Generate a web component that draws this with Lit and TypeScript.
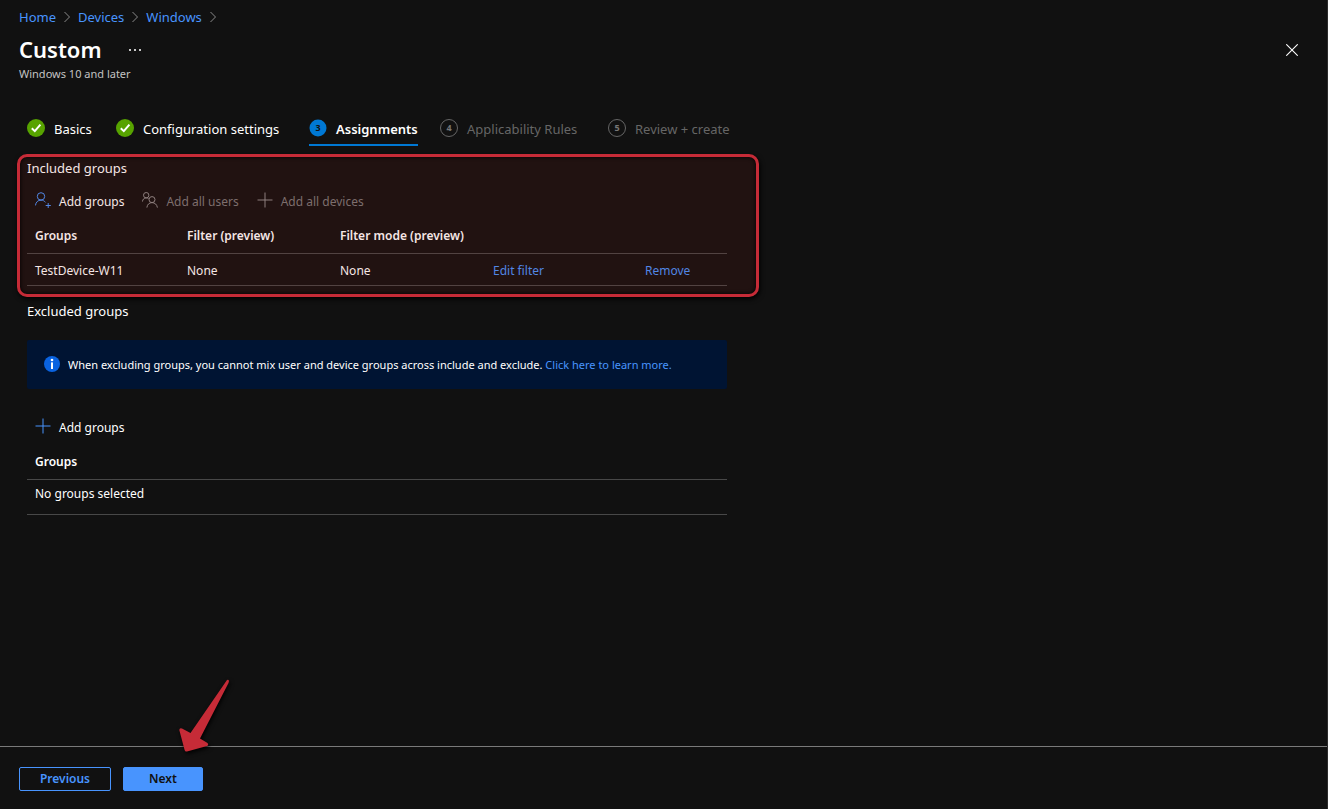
import { LitElement, html, svg, css, nothing } from "lit";
import { customElement } from "lit/decorators.js";
import { classMap } from "lit/directives/class-map.js";

type StepState = "done" | "current" | "pending";

interface Step {
  label: string;
  state: StepState;
}

const chevron = html`<svg class="chevron" viewBox="0 0 8 12" aria-hidden="true">
  <path d="M1.5 1 L6.5 6 L1.5 11" />
</svg>`;

const plusIcon = html`<svg class="icon" viewBox="0 0 16 16" aria-hidden="true">
  <path d="M8 0.5 V15.5 M0.5 8 H15.5" />
</svg>`;

const personAddIcon = html`<svg class="icon" viewBox="0 0 16 16" aria-hidden="true">
  <circle cx="6" cy="4.4" r="3.7" />
  <path d="M0.5 13.4 C0.7 10.3 3 8.1 6 8.1 C7.9 8.1 9.5 9 10.5 10.4 M13.2 11 V16 M10.7 13.5 H15.8" />
</svg>`;

const peopleIcon = html`<svg class="icon" viewBox="0 0 16 16" aria-hidden="true">
  <circle cx="4.2" cy="3.2" r="2.7" />
  <circle cx="10" cy="7.6" r="3" />
  <path d="M0.4 9.6 C0.7 7.3 2.2 5.9 4.2 5.9 C5.2 5.9 6 6.2 6.7 6.8 M4.9 15.6 C5.1 12.7 7.2 10.6 10 10.6 C12.9 10.6 15 12.7 15.4 15.6" />
</svg>`;

@customElement("app-root")
export class AppRoot extends LitElement {
  private crumbs = ["Home", "Devices", "Windows"];

  private steps: Step[] = [
    { label: "Basics", state: "done" },
    { label: "Configuration settings", state: "done" },
    { label: "Assignments", state: "current" },
    { label: "Applicability Rules", state: "pending" },
    { label: "Review + create", state: "pending" },
  ];

  static styles = css`
    :host {
      display: flex;
      flex-direction: column;
      box-sizing: border-box;
      min-height: 100vh;
      background: #111111;
      border-right: 1px solid #2b2b2b;
      color: #ffffff;
      font-family: "Noto Sans", "Open Sans", sans-serif;
      font-size: 13px;
      line-height: 20px;
    }
    * {
      box-sizing: border-box;
    }
    svg {
      display: block;
      flex: none;
      fill: none;
    }
    a {
      color: #4894fe;
      text-decoration: none;
    }
    button {
      font: inherit;
      color: inherit;
      background: none;
      border: 0;
      padding: 0;
      cursor: pointer;
    }
    h1,
    h2,
    p,
    ol {
      margin: 0;
      padding: 0;
      list-style: none;
    }
    main {
      flex: 1;
    }
    .header {
      padding: 7px 19px 0;
    }
    .crumbs {
      display: flex;
      align-items: center;
    }
    .crumb {
      display: flex;
      align-items: center;
    }
    .chevron {
      width: 8px;
      height: 12px;
      margin: 0 7px;
      stroke: #8a8a8a;
    }
    .title-row {
      display: flex;
      align-items: center;
      height: 32px;
      margin-top: 6px;
    }
    .title {
      font-size: 22px;
      line-height: 32px;
      font-weight: 600;
    }
    .more,
    .close {
      padding-top: 2px;
    }
    .more {
      margin-left: 27px;
    }
    .more svg {
      width: 12px;
      height: 4px;
      fill: #c8c8c8;
    }
    .close {
      margin-left: auto;
      margin-right: 10px;
    }
    .close svg {
      width: 12px;
      height: 12px;
      stroke: #ffffff;
      stroke-width: 1.1;
    }
    .subtitle {
      font-size: 11px;
      line-height: 16px;
      margin-top: 1px;
      color: #c3c3c3;
    }
    .content {
      padding: 36px 27px 24px;
    }
    .steps {
      display: grid;
      grid-template-columns: 89px 193px 131px 168px auto;
      justify-content: start;
      justify-items: start;
    }
    .step {
      display: flex;
      align-items: center;
      gap: 9px;
      height: 28px;
      padding-bottom: 6px;
      border-bottom: 2px solid transparent;
      white-space: nowrap;
    }
    .step svg {
      width: 18px;
      height: 18px;
    }
    .step-label {
      padding-top: 2px;
    }
    .step.current {
      border-color: #0078d4;
      font-weight: 600;
    }
    .step.pending {
      color: #666666;
    }
    .num {
      font-size: 9px;
      font-weight: 700;
      text-anchor: middle;
    }
    .dot-done {
      fill: #57a300;
    }
    .tick {
      stroke: #ffffff;
      stroke-width: 2;
    }
    .dot-current {
      fill: #0078d4;
    }
    .num-current {
      fill: #111111;
    }
    .dot-pending {
      stroke: #666666;
    }
    .num-pending {
      fill: #777777;
    }
    .groups {
      position: relative;
      max-width: 700px;
      margin-top: 12px;
    }
    .groups.excluded {
      margin-top: 15px;
    }
    .highlight {
      position: absolute;
      inset: -4px -32px -11px -10px;
      border: 3px solid #c62b37;
      border-radius: 10px;
      background: rgba(160, 25, 20, 0.11);
      box-shadow: 1px 2px 5px #000000, inset 0 0 4px #000000;
      pointer-events: none;
    }
    h2 {
      font-size: 13px;
      font-weight: 400;
    }
    .toolbar {
      display: flex;
      align-items: center;
      gap: 18px;
      height: 34px;
      padding: 2px 8px 0;
      margin-top: 6px;
    }
    .toolbar,
    table {
      font-size: 12px;
    }
    .command {
      display: flex;
      align-items: center;
      gap: 8px;
      white-space: nowrap;
    }
    .command:disabled {
      color: #797979;
    }
    .icon {
      width: 16px;
      height: 16px;
      margin-bottom: 4px;
      stroke: #4894fe;
    }
    .command:disabled .icon {
      stroke: #8c8c8c;
    }
    table {
      width: 100%;
      table-layout: fixed;
      border-collapse: separate;
      border-spacing: 0;
    }
    th,
    td {
      padding: 0 0 0 8px;
      text-align: left;
      border-bottom: 1px solid #484848;
      white-space: nowrap;
    }
    th {
      height: 36px;
      font-weight: 600;
    }
    td {
      height: 32px;
      padding-top: 2px;
    }
    .c-a {
      width: 152px;
    }
    .c-b {
      width: 153px;
    }
    .empty td {
      height: 35px;
      padding-top: 4px;
      vertical-align: top;
    }
    .notice {
      display: flex;
      align-items: center;
      gap: 8px;
      min-height: 49px;
      margin-top: 19px;
      padding: 8px 17px;
      border-radius: 2px;
      background: #001433;
      font-size: 11px;
    }
    .notice svg {
      width: 16px;
      height: 16px;
      margin-bottom: 2px;
    }
    .info-dot {
      fill: #0a63e0;
    }
    .info-mark {
      fill: #ffffff;
    }
    .notice + .toolbar {
      margin-top: 21px;
    }
    .footer {
      position: relative;
      display: flex;
      gap: 12px;
      padding: 20px 19px 18px;
      border-top: 1px solid #7a7a7a;
    }
    .btn {
      height: 24px;
      line-height: 20px;
      border: 1px solid #4894fe;
      border-radius: 2px;
      font-weight: 600;
      font-size: 12px;
    }
    .previous {
      min-width: 92px;
      color: #4894fe;
    }
    .next {
      min-width: 80px;
      background: #4894fe;
      color: #111111;
    }
    .arrow {
      position: absolute;
      left: 170px;
      top: -77px;
      width: 70px;
      height: 90px;
      fill: #c62b37;
      filter: drop-shadow(1px 2px 2px #000000);
      pointer-events: none;
    }
  `;

  private stepIcon(step: Step, n: number) {
    if (step.state === "done") {
      return html`<svg viewBox="0 0 18 18" aria-hidden="true">
        <circle class="dot-done" cx="9" cy="9" r="9" />
        <path class="tick" d="M4.8 9.2 L7.8 12.1 L13.4 5.6" />
      </svg>`;
    }
    const current = step.state === "current";
    return html`<svg viewBox="0 0 18 18" aria-hidden="true">
      ${current
        ? svg`<circle class="dot-current" cx="9" cy="9" r="8.5" />`
        : svg`<circle class="dot-pending" cx="9" cy="9" r="8.5" />`}
      <text class="num ${current ? "num-current" : "num-pending"}" x="9" y="12">${n}</text>
    </svg>`;
  }

  private renderHeader() {
    return html`<header class="header">
      <nav class="crumbs" aria-label="Breadcrumb">
        ${this.crumbs.map((c) => html`<span class="crumb"><a href="#">${c}</a>${chevron}</span>`)}
      </nav>
      <div class="title-row">
        <h1 class="title">Custom</h1>
        <button class="more" aria-label="More">
          <svg viewBox="0 0 12 4"><rect x="0" y="1" width="2" height="2" /><rect x="5" y="1" width="2" height="2" /><rect x="10" y="1" width="2" height="2" /></svg>
        </button>
        <button class="close" aria-label="Close">
          <svg viewBox="0 0 12 12"><path d="M0.3 0.3 L11.7 11.7 M11.7 0.3 L0.3 11.7" /></svg>
        </button>
      </div>
      <p class="subtitle">Windows 10 and later</p>
    </header>`;
  }

  private renderSteps() {
    return html`<ol class="steps">
      ${this.steps.map(
        (s, i) => html`<li
          class=${classMap({ step: true, [s.state]: true })}
          aria-current=${s.state === "current" ? "step" : nothing}
        >
          ${this.stepIcon(s, i + 1)}<span class="step-label">${s.label}</span>
        </li>`
      )}
    </ol>`;
  }

  private renderIncluded() {
    return html`<section class="groups">
      <h2>Included groups</h2>
      <div class="toolbar">
        <button class="command">${personAddIcon}Add groups</button>
        <button class="command" disabled>${peopleIcon}Add all users</button>
        <button class="command" disabled>${plusIcon}Add all devices</button>
      </div>
      <table>
        <colgroup>
          <col class="c-a" /><col class="c-b" /><col class="c-b" /><col class="c-a" /><col />
        </colgroup>
        <thead>
          <tr>
            <th>Groups</th>
            <th>Filter (preview)</th>
            <th>Filter mode (preview)</th>
            <th></th>
            <th></th>
          </tr>
        </thead>
        <tbody>
          <tr>
            <td>TestDevice-W11</td>
            <td>None</td>
            <td>None</td>
            <td><a href="#">Edit filter</a></td>
            <td><a href="#">Remove</a></td>
          </tr>
        </tbody>
      </table>
      <div class="highlight"></div>
    </section>`;
  }

  private renderExcluded() {
    return html`<section class="groups excluded">
      <h2>Excluded groups</h2>
      <div class="notice">
        <svg viewBox="0 0 16 16" aria-hidden="true">
          <circle class="info-dot" cx="8" cy="8" r="8" />
          <circle class="info-mark" cx="8" cy="4" r="1.3" />
          <rect class="info-mark" x="7" y="6.4" width="2" height="6.6" />
        </svg>
        <p>
          When excluding groups, you cannot mix user and device groups across include and exclude.
          <a href="#">Click here to learn more.</a>
        </p>
      </div>
      <div class="toolbar">
        <button class="command">${plusIcon}Add groups</button>
      </div>
      <table>
        <thead>
          <tr><th>Groups</th></tr>
        </thead>
        <tbody>
          <tr class="empty"><td>No groups selected</td></tr>
        </tbody>
      </table>
    </section>`;
  }

  render() {
    return html`
      ${this.renderHeader()}
      <main class="content">${this.renderSteps()} ${this.renderIncluded()} ${this.renderExcluded()}</main>
      <footer class="footer">
        <button class="btn previous">Previous</button>
        <button class="btn next">Next</button>
        <svg class="arrow" viewBox="170 670 70 90" aria-hidden="true">
          <path d="M227 680 Q228.5 679 229 681 L228.5 683 L200 738.5 L207.5 743 Q209 745 207 746 L187 751.5 Q185 752 184.6 750 L179.3 730 Q179.5 727.5 182 728.5 L190.5 733 Z" />
        </svg>
      </footer>
    `;
  }
}
